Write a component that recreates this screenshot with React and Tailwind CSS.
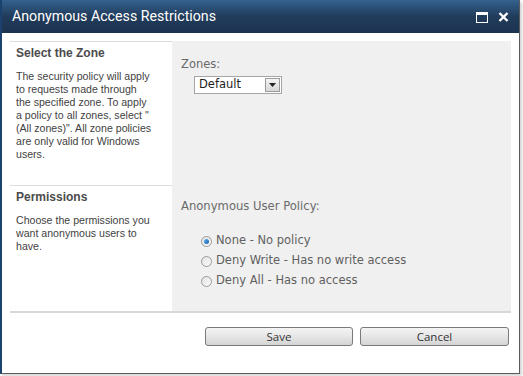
import React from "react";

function Radio({ checked }) {
  return (
    <span className="relative inline-flex h-[11px] w-[11px] shrink-0 items-center justify-center rounded-full border border-[#9a9a9a] bg-gradient-to-br from-[#e2e2e2] to-[#fbfbfb]">
      {checked && (
        <span className="h-[5px] w-[5px] rounded-full bg-gradient-to-br from-[#5ab0f0] to-[#1a5ea8]" />
      )}
    </span>
  );
}

export default function App() {
  const left = { fontFamily: '"Liberation Sans", Arial, sans-serif' };
  const right = { fontFamily: '"DejaVu Sans", Verdana, sans-serif' };
  return (
    <div className="h-[376px] w-[523px] bg-white">
      <div className="flex h-[374px] w-[520px] flex-col border-b border-l-2 border-r border-[#5b5b5b] border-l-[#1b426f] bg-white shadow-[2px_2px_3px_rgba(0,0,0,0.18)]">
        {/* Title bar */}
        <div className="flex h-[33px] items-center justify-between bg-gradient-to-b from-[#34628f] via-[#213c5b] to-[#1c3350] pl-[10px] pr-[6px]">
          <span
            className="text-[14.2px] leading-none text-white"
            style={{ fontFamily: 'Roboto, "Noto Sans", sans-serif' }}
          >
            Anonymous Access Restrictions
          </span>
          <div className="flex items-center gap-[10px] pt-[1px]">
            <span className="block h-[11px] w-[12px] border border-t-[3px] border-white" />
            <svg width="11" height="10" viewBox="0 0 11 10" className="mr-[4px]">
              <path d="M1.5 1 L9.5 9 M9.5 1 L1.5 9" stroke="white" strokeWidth="2.4" />
            </svg>
          </div>
        </div>

        {/* Body */}
        <div className="pl-[8px] pt-[8px]">
          <div className="w-[501px]">
            {/* Row 1 */}
            <div className="flex h-[144px]">
              <div className="w-[162px] border-t border-[#dcdcdc] pl-[6px] pr-[4px] pt-[5px] text-[#3f3f3f]" style={left}>
                <div className="text-[12px] font-bold leading-[13px] text-[#4b4b4b]">Select the Zone</div>
                <div className="mt-[10px] whitespace-nowrap text-[10.6px] leading-[13px]">
                  The security policy will apply<br />
                  to requests made through<br />
                  the specified zone. To apply<br />
                  a policy to all zones, select "<br />
                  (All zones)". All zone policies<br />
                  are only valid for Windows<br />
                  users.
                </div>
              </div>
              <div className="flex-1 bg-[#f0f0f0] pl-[9px] pt-[17px]" style={right}>
                <div className="text-[11.5px] leading-[13px] text-[#6a6a6a]">Zones:</div>
                <div className="ml-[13px] mt-[5px] flex h-[18px] w-[88px] items-center justify-between border border-[#a5a5a5] bg-white pl-[4px] pr-[1px]">
                  <span className="text-[11.5px] leading-none text-[#1e1e1e]">Default</span>
                  <span className="flex h-[14px] w-[15px] items-center justify-center border border-[#9a9a9a] bg-gradient-to-b from-[#f4f4f4] to-[#d6d6d6]">
                    <svg width="7" height="4" viewBox="0 0 7 4">
                      <path d="M0 0 H7 L3.5 4 Z" fill="#222" />
                    </svg>
                  </span>
                </div>
              </div>
            </div>
            {/* Row 2 */}
            <div className="flex h-[126px]">
              <div className="w-[162px] border-t border-[#dcdcdc] pl-[6px] pr-[4px] pt-[5px] text-[#3f3f3f]" style={left}>
                <div className="text-[12px] font-bold leading-[13px] text-[#4b4b4b]">Permissions</div>
                <div className="mt-[10px] whitespace-nowrap text-[10.6px] leading-[13px]">
                  Choose the permissions you<br />
                  want anonymous users to<br />
                  have.
                </div>
              </div>
              <div className="flex-1 bg-[#f0f0f0] pl-[9px] pt-[15px] text-[#606060]" style={right}>
                <div className="text-[11.6px] leading-[13px] text-[#6a6a6a]">Anonymous User Policy:</div>
                <div className="ml-[20px] mt-[18px] flex flex-col text-[11.5px]">
                  <div className="flex h-[20px] items-center gap-[4px]">
                    <Radio checked />
                    <span>None - No policy</span>
                  </div>
                  <div className="flex h-[20px] items-center gap-[4px]">
                    <Radio />
                    <span>Deny Write - Has no write access</span>
                  </div>
                  <div className="flex h-[20px] items-center gap-[4px]">
                    <Radio />
                    <span>Deny All - Has no access</span>
                  </div>
                </div>
              </div>
            </div>
            <div className="h-[2px] bg-[#d8d8d8]" />
            {/* Buttons */}
            <div className="mt-[14px] flex justify-end gap-[7px] pr-[2px]" style={{ fontFamily: '"Open Sans", "Noto Sans", sans-serif' }}>
              <button className="flex h-[19px] w-[148px] items-center justify-center rounded-[3px] border border-[#7a7a7a] bg-gradient-to-b from-[#f4f4f4] via-[#e6e6e6] to-[#d4d4d4] text-[11.5px] leading-none text-[#333]">
                Save
              </button>
              <button className="flex h-[19px] w-[149px] items-center justify-center rounded-[3px] border border-[#7a7a7a] bg-gradient-to-b from-[#f4f4f4] via-[#e6e6e6] to-[#d4d4d4] text-[11.5px] leading-none text-[#333]">
                Cancel
              </button>
            </div>
          </div>
        </div>
      </div>
    </div>
  );
}
